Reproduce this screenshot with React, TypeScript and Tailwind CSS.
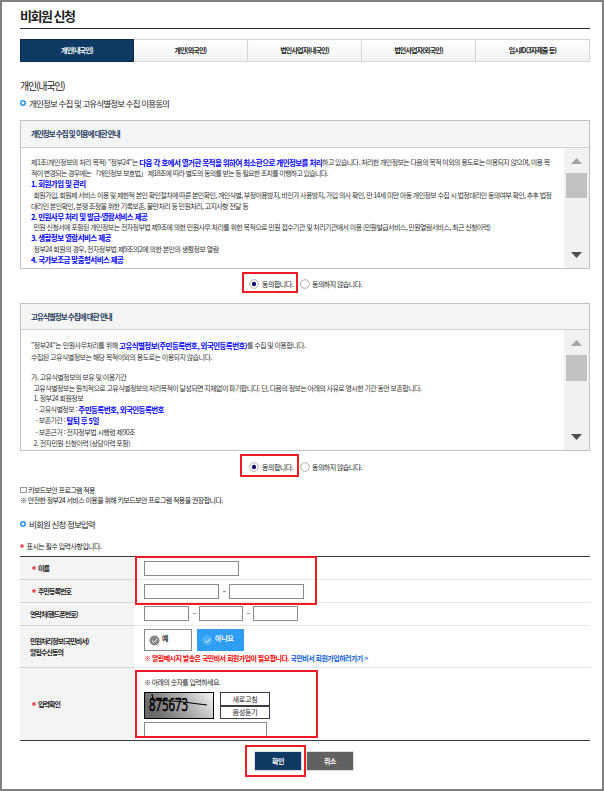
import React from "react";
import clsx from "clsx";

const tabs = [
  { title: "개인(내국인)", tracking: "tracking-[-0.79px]" },
  { title: "개인(외국인)", tracking: "tracking-[-0.79px]" },
  { title: "법인사업자(내국인)", tracking: "tracking-[-0.83px]" },
  { title: "법인사업자(외국인)", tracking: "tracking-[-0.83px]" },
  { title: "임시ID(3자제출 등)", tracking: "tracking-[-0.83px]" },
];

const Line = ({
  className,
  tracking = "tracking-[-0.55px]",
  children,
}: {
  className?: string;
  tracking?: string;
  children: React.ReactNode;
}) => (
  <p className={clsx("flex items-center whitespace-pre leading-none", tracking, className)}>
    {children}
  </p>
);

const Strong = ({ children }: { children: React.ReactNode }) => (
  <b className="text-[7.5px] font-bold tracking-[-0.58px] text-[#0000ff]">
    {children}
  </b>
);

const ScrollBar = ({ thumb }: { thumb: string }) => (
  <div className="flex w-[25px] shrink-0 flex-col items-center bg-[#f1f1f1] pt-[10px] pb-[10px]">
    <svg width="11" height="6" viewBox="0 0 11 6" className="shrink-0">
      <path d="M0 6L5.5 0L11 6Z" fill="#a3a3a3" />
    </svg>
    <div className={clsx("mt-[9px] w-[21px] shrink-0 bg-[#c1c1c1]", thumb)} />
    <svg width="11" height="6" viewBox="0 0 11 6" className="mt-auto shrink-0">
      <path d="M0 0L5.5 6L11 0Z" fill="#505050" />
    </svg>
  </div>
);

const Radio = ({ checked }: { checked?: boolean }) => (
  <svg width="10" height="10" viewBox="0 0 10 10" className="shrink-0">
    <circle cx="5" cy="5" r="4.3" fill="#fff" stroke="#8a8a8a" strokeWidth="0.7" />
    {checked && <circle cx="5" cy="5" r="2.2" fill="#14146e" />}
  </svg>
);

const Agreement = ({ className }: { className?: string }) => (
  <div
    className={clsx(
      "flex h-[10px] items-center pl-[229px] text-[7px] leading-none text-[#222]",
      className
    )}
  >
    <Radio checked />
    <span className="ml-[3px] w-[38px] tracking-[-0.5px] whitespace-nowrap">동의합니다.</span>
    <Radio />
    <span className="ml-[2px] tracking-[-0.55px] whitespace-nowrap">동의하지 않습니다.</span>
  </div>
);

const SectionTitle = ({
  className,
  children,
}: {
  className?: string;
  children: React.ReactNode;
}) => (
  <h3
    className={clsx(
      "flex h-[12px] items-center text-[8.5px] leading-none tracking-[-0.85px] text-[#222]",
      className
    )}
  >
    <svg width="6" height="6" viewBox="0 0 6 6" className="mr-[3px] shrink-0">
      <circle cx="3" cy="3" r="2.2" fill="#fff" stroke="#2a96e8" strokeWidth="1.6" />
    </svg>
    {children}
  </h3>
);

const Input = ({ className }: { className?: string }) => (
  <input className={clsx("block h-[15px] border border-[#8a8a8a] bg-white", className)} />
);

const Dash = () => (
  <span className="flex w-[10px] justify-center">
    <span className="h-px w-[3px] bg-[#999]" />
  </span>
);

const Star = ({ className }: { className?: string }) => (
  <svg width="4" height="4" viewBox="0 0 4 4" className={clsx("shrink-0", className)}>
    <path d="M2 0V4M0.2 1L3.8 3M3.8 1L0.2 3" stroke="#e8202a" strokeWidth="0.9" />
  </svg>
);

const FormRow = ({
  label,
  required,
  last,
  className,
  children,
}: {
  label: React.ReactNode;
  required?: boolean;
  last?: boolean;
  className?: string;
  children: React.ReactNode;
}) => (
  <div className={clsx("flex", className)}>
    <div
      className={clsx(
        "flex w-[114px] shrink-0 items-center bg-[#f4f4f4] text-[7px] font-bold tracking-[-0.93px] text-[#222]",
        required ? "pl-[12px]" : "pl-[10px]",
        !last && "border-b border-[#d2d2d2]"
      )}
    >
      {required && <Star className="mr-[2px]" />}
      <div className="leading-[10.5px]">{label}</div>
    </div>
    <div className={clsx("flex-1 pl-[10px]", !last && "border-b border-[#e8e8e8]")}>
      {children}
    </div>
  </div>
);

const CheckMark = ({ fill }: { fill: string }) => (
  <svg width="11" height="11" viewBox="0 0 11 11" className="shrink-0">
    <circle cx="5.5" cy="5.5" r="5" fill={fill} />
    <path d="M3 5.8L4.8 7.5L8.2 4" fill="none" stroke="#fff" strokeWidth="1" />
  </svg>
);

const Highlight = ({ className }: { className: string }) => (
  <div className={clsx("pointer-events-none absolute border-2 border-[#ee1c25]", className)} />
);

const App = () => {
  return (
    <main
      lang="ko"
      className="relative h-[791px] w-[604px] overflow-hidden border-2 border-[#808080] bg-white pl-[18px] font-['Noto_Sans_CJK_KR',sans-serif]"
    >
      <h1 className="flex h-[27px] w-[570px] items-center border-b border-[#2b2b2b] text-[13px] leading-none font-bold tracking-[-1.5px] text-[#222]">
        비회원 신청
      </h1>

      <ul className="mt-[10px] flex h-[23px] w-[570px]">
        {tabs.map((tab, index) => (
          <li
            key={index}
            className={clsx(
              "flex w-[114px] shrink-0 items-center justify-center text-[7px] leading-none font-bold whitespace-nowrap",
              tab.tracking,
              index === 0
                ? "border border-[#0a2a4a] bg-[#0f3a63] text-white"
                : "border-y border-r border-[#d4d4d4] bg-gradient-to-b from-white to-[#f0f2f2] text-[#222]"
            )}
          >
            {tab.title}
          </li>
        ))}
      </ul>

      <h2 className="mt-[18px] flex h-[12px] items-center text-[10px] leading-none tracking-[-1.18px] text-[#222]">
        개인(내국인)
      </h2>
      <SectionTitle className="mt-[5px]">
        개인정보 수집 및 고유식별정보 수집 이용동의
      </SectionTitle>

      {/* 개인정보 수집 및 이용 */}
      <section className="mt-[11px] flex h-[149px] w-[570px] flex-col border border-[#c1c1c1]">
        <h4 className="flex h-[27px] shrink-0 items-center border-b border-[#d2d2d2] bg-[#f4f4f4] pl-[10px] text-[7.5px] leading-none font-bold tracking-[-0.97px] text-[#1c3a5c]">
          개인정보 수집 및 이용에 대한 안내
        </h4>
        <div className="flex min-h-0 flex-1">
          <div className="flex-1 overflow-hidden pt-[9px] pl-[10px] text-[7px] text-[#333]">
            <Line className="h-[11px]" tracking="tracking-[-0.61px]">
              <span className="tracking-[-0.51px]">{'제1조(개인정보의 처리 목적) "정부24"는 '}</span>
              <Strong>다음 각 호에서 열거한 목적을 위하여 최소한으로 개인정보를 처리</Strong>
              하고 있습니다. 처리한 개인정보는 다음의 목적 이외의 용도로는 이용되지 않으며, 이용 목
            </Line>
            <Line className="h-[11px]" tracking="tracking-[-0.69px]">
              적이 변경되는 경우에는 「개인정보 보호법」 제18조에 따라 별도의 동의를 받는 등 필요한 조치를 이행하고 있습니다.
            </Line>
            <Line className="h-[10px]">
              <Strong>1. 회원가입 및 관리</Strong>
            </Line>
            <Line className="h-[12px] pl-[2.5px]" tracking="tracking-[-0.63px]">
              회원가입, 회원제 서비스 이용 및 제한적 본인 확인절차에 따른 본인확인, 개인식별, 부정이용방지, 비인가 사용방지, 가입 의사 확인, 만 14세 미만 아동 개인정보 수집 시 법정대리인 동의여부 확인, 추후 법정
            </Line>
            <Line className="h-[11px]" tracking="tracking-[-0.61px]">
              대리인 본인확인, 분쟁 조정을 위한 기록보존, 불만처리 등 민원처리, 고지사항 전달 등
            </Line>
            <Line className="h-[10px]">
              <Strong>2. 민원사무 처리 및 발급·열람서비스 제공</Strong>
            </Line>
            <Line className="h-[11px] pl-[2.5px]" tracking="tracking-[-0.59px]">
              민원 신청서에 포함된 개인정보는 전자정부법 제9조에 의한 민원사무 처리를 위한 목적으로 민원 접수기관 및 처리기관에서 이용 (민원발급서비스, 민원열람서비스, 최근 신청이력)
            </Line>
            <Line className="h-[10px]">
              <Strong>3. 생활정보 열람서비스 제공</Strong>
            </Line>
            <Line className="h-[12px] pl-[2.5px]">
              정부24 회원의 경우, 전자정부법 제9조의2에 의한 본인의 생활정보 열람
            </Line>
            <Line className="h-[10px]">
              <Strong>4. 국가보조금 맞춤형서비스 제공</Strong>
            </Line>
          </div>
          <ScrollBar thumb="h-[25px]" />
        </div>
      </section>
      <Agreement className="mt-[10px]" />

      {/* 고유식별정보 수집 */}
      <section className="mt-[14px] flex h-[148px] w-[570px] flex-col border border-[#c1c1c1]">
        <h4 className="flex h-[26px] shrink-0 items-center border-b border-[#d2d2d2] bg-[#f4f4f4] pl-[10px] text-[7.5px] leading-none font-bold tracking-[-0.95px] text-[#1c3a5c]">
          고유식별정보 수집에 대한 안내
        </h4>
        <div className="flex min-h-0 flex-1">
          <div className="flex-1 overflow-hidden pt-[10px] pl-[10px] text-[7px] text-[#333]">
            <Line className="h-[11px]" tracking="tracking-[-0.6px]">
              <span className="tracking-[-0.5px]">{'"정부24"는 민원사무처리를 위해 '}</span>
              <Strong>고유식별정보(주민등록번호, 외국인등록번호)</Strong>
              를 수집 및 이용합니다.
            </Line>
            <Line className="h-[12px]">
              수집된 고유식별정보는 해당 목적이외의 용도로는 이용되지 않습니다.
            </Line>
            <Line className="mt-[9px] h-[11px]">가. 고유식별정보의 보유 및 이용기간</Line>
            <Line className="h-[10px] pl-[2.5px]" tracking="tracking-[-0.585px]">
              고유식별정보는 원칙적으로 고유식별정보의 처리목적이 달성되면 지체없이 파기합니다. 단, 다음의 정보는 아래의 사유로 명시한 기간 동안 보존합니다.
            </Line>
            <Line className="h-[11px] pl-[2.5px]">1. 정부24 회원정보</Line>
            <Line className="h-[11px] pl-[4.5px]">
              {"- 고유식별정보 : "}
              <Strong>주민등록번호, 외국인등록번호</Strong>
            </Line>
            <Line className="h-[11px] pl-[4.5px]">
              {"- 보존기간 : "}
              <Strong>탈퇴 후 5일</Strong>
            </Line>
            <Line className="h-[12px] pl-[4.5px]">- 보존근거 : 전자정부법 시행령 제90조</Line>
            <Line className="h-[10px] pl-[2.5px]">2. 전자민원 신청이력 (상담이력 포함)</Line>
          </div>
          <ScrollBar thumb="h-[26px]" />
        </div>
      </section>
      <Agreement className="mt-[11px]" />

      <div className="mt-[13px] text-[7px] leading-none text-[#222]">
        <label className="flex h-[10px] items-center tracking-[-0.6px]">
          <span className="mr-[1.5px] size-[6.5px] border border-[#999] bg-white" />
          키보드보안 프로그램 적용
        </label>
        <p className="flex h-[11px] items-center tracking-[-0.58px]">
          ※ 안전한 정부24 서비스 이용을 위해 키보드보안 프로그램 적용을 권장합니다.
        </p>
      </div>

      <SectionTitle className="mt-[12px]">비회원 신청 정보입력</SectionTitle>
      <p className="mt-[10px] flex h-[12px] items-center text-[7px] leading-none tracking-[-0.56px] text-[#222]">
        <Star className="mr-[2.5px]" />
        표시는 필수 입력사항입니다.
      </p>

      <form className="mt-[4px] w-[570px] border-y border-[#3a3a3a]">
        <FormRow label="이름" required className="h-[23px]">
          <Input className="mt-[4px] w-[95px]" />
        </FormRow>
        <FormRow label="주민등록번호" required className="h-[23px]">
          <div className="flex items-center pt-[4px]">
            <Input className="w-[75px]" />
            <Dash />
            <Input className="w-[75px]" />
          </div>
        </FormRow>
        <FormRow label="연락처(핸드폰번호)" className="h-[23px]">
          <div className="flex items-center pt-[3px]">
            <Input className="w-[45px]" />
            <Dash />
            <Input className="w-[44px]" />
            <Dash />
            <Input className="w-[45px]" />
          </div>
        </FormRow>
        <FormRow
          className="h-[42px]"
          label={
            <>
              민원처리정보(국민비서)
              <br />
              알림수신동의
            </>
          }
        >
          <div className="flex gap-[5px] pt-[3px] text-[7px] leading-none font-bold">
            <button
              type="button"
              className="flex h-[22px] w-[48px] items-center border border-[#8a8a8a] bg-white pl-[4px] text-[#333]"
            >
              <CheckMark fill="#868686" />
              <span className="-mt-[3px] ml-[2px]">예</span>
            </button>
            <button
              type="button"
              className="flex h-[22px] w-[47px] items-center bg-[#2196f3] bg-[repeating-linear-gradient(135deg,transparent_0_1.5px,#4aabf7_1.5px_2.2px)] pl-[5px] text-white"
            >
              <CheckMark fill="#4bb0fa" />
              <span className="-mt-[3px] ml-[2px] tracking-[-0.28px]">아니요</span>
            </button>
          </div>
          <p className="mt-[2px] flex h-[11px] items-center text-[7px] leading-none font-bold tracking-[-0.54px] whitespace-pre text-[#f00]">
            {"※ 알림메시지 발송은 국민비서 회원가입이 필요합니다. "}
            <a className="text-[#0a5bd8]">국민비서 회원가입하러가기 &gt;</a>
          </p>
        </FormRow>
        <FormRow label="입력확인" required last className="h-[72px]">
          <p className="mt-[9px] flex h-[10px] items-center text-[7px] leading-none tracking-[-0.6px] text-[#222]">
            ※ 아래의 숫자를 입력하세요.
          </p>
          <div className="mt-[5px] flex gap-[6px]">
            <svg width="70" height="27" viewBox="0 0 70 27" className="overflow-visible">
              <defs>
                <linearGradient id="captcha" x1="0" y1="0.3" x2="1" y2="0">
                  <stop offset="0" stopColor="#6a6a6a" />
                  <stop offset="1" stopColor="#f4f4f4" />
                </linearGradient>
              </defs>
              <rect x="0.5" y="0.5" width="69" height="26" fill="url(#captcha)" stroke="#000" />
              <text
                x="5"
                y="19"
                textLength="39"
                lengthAdjust="spacingAndGlyphs"
                className="font-['Open_Sans',sans-serif] text-[19px]"
                stroke="#000"
                strokeWidth="0.6"
              >
                875673
              </text>
              <path d="M8 2L9 8L35 9.5L63 13" fill="none" stroke="#000" strokeWidth="1.2" />
            </svg>
            <div className="flex h-[27px] w-[50px] flex-col border border-[#3c3c3c] text-[7px] leading-none tracking-[-0.25px] text-[#222]">
              <button type="button" className="h-[13px] border-b border-[#3c3c3c]">
                새로고침
              </button>
              <button type="button" className="h-[12px] border-t border-[#3c3c3c]">
                음성듣기
              </button>
            </div>
          </div>
          <Input className="mt-[3px] w-[123px]" />
        </FormRow>
      </form>

      <div className="mt-[10px] flex gap-[4px] pl-[234px] text-[7px] leading-none font-bold tracking-[-0.45px] text-white">
        <button className="h-[20px] w-[48px] border border-[#dcdfe2] bg-[#0f3a63]">확인</button>
        <button className="h-[20px] w-[48px] border border-[#dcdcdc] bg-[#616161]">취소</button>
      </div>

      {/* 강조 표시 */}
      <Highlight className="top-[270px] left-[240px] h-[21px] w-[56px]" />
      <Highlight className="top-[452px] left-[238px] h-[23px] w-[59px]" />
      <Highlight className="top-[554px] left-[133px] h-[49px] w-[182px]" />
      <Highlight className="top-[668px] left-[133px] h-[68px] w-[183px]" />
      <Highlight className="top-[743px] left-[243px] h-[32px] w-[61px]" />
    </main>
  );
};

export default App;
